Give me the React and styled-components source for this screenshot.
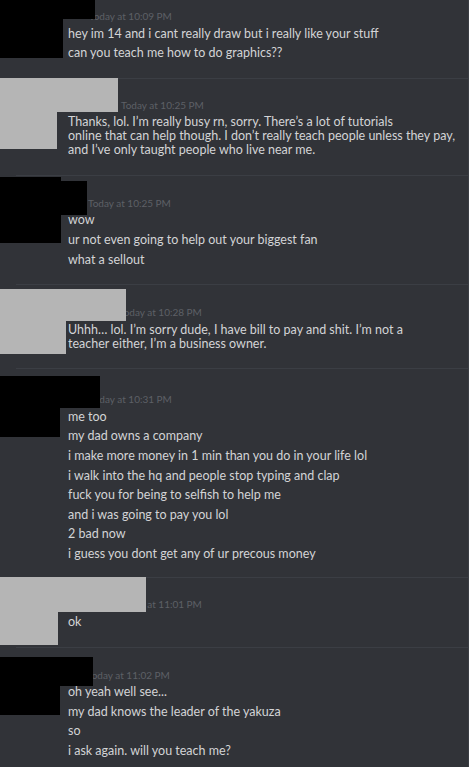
import React from "react";
import styled, { createGlobalStyle } from "styled-components";

const GlobalStyle = createGlobalStyle`
  html, body {
    margin: 0;
    padding: 0;
    background: #313338;
  }
`;

const groups = [
  {
    time: "Today at 10:09 PM",
    timeX: 89,
    padTop: 7,
    tone: "black",
    boxes: [
      { top: 0, w: 95, h: 19 },
      { top: 0, w: 63, h: 58 },
    ],
    messages: [
      ["hey im 14 and i cant really draw but i really like your stuff"],
      ["can you teach me how to do graphics??"],
    ],
  },
  {
    time: "Today at 10:25 PM",
    timeX: 121,
    tone: "gray",
    boxes: [
      { top: 0, w: 118, h: 34 },
      { top: 0, w: 57, h: 71 },
    ],
    messages: [
      [
        "Thanks, lol. I’m really busy rn, sorry. There’s a lot of tutorials",
        "online that can help though. I don’t really teach people unless they pay,",
        "and I’ve only taught people who live near me.",
      ],
    ],
  },
  {
    time: "Today at 10:25 PM",
    timeX: 88,
    padTop: 19,
    tone: "black",
    boxes: [
      { top: 6, w: 87, h: 34 },
      { top: 2, w: 61, h: 66 },
    ],
    messages: [["wow"], ["ur not even going to help out your biggest fan"], ["what a sellout"]],
  },
  {
    time: "Today at 10:28 PM",
    timeX: 119,
    padTop: 19,
    tone: "gray",
    boxes: [
      { top: 5, w: 126, h: 32 },
      { top: 5, w: 66, h: 65 },
    ],
    messages: [
      [
        "Uhhh… lol. I’m sorry dude, I have bill to pay and shit. I’m not a",
        "teacher either, I’m a business owner.",
      ],
    ],
  },
  {
    time: "Today at 10:31 PM",
    timeX: 89,
    padTop: 22,
    padBottom: 16.5,
    tone: "black",
    boxes: [
      { top: 8, w: 100, h: 32 },
      { top: 8, w: 60, h: 61 },
    ],
    messages: [
      ["me too"],
      ["my dad owns a company"],
      ["i make more money in 1 min than you do in your life lol"],
      ["i walk into the hq and people stop typing and clap"],
      ["fuck you for being to selfish to help me"],
      ["and i was going to pay you lol"],
      ["2 bad now"],
      ["i guess you dont get any of ur precous money"],
    ],
  },
  {
    time: "Today at 11:01 PM",
    timeX: 119,
    tone: "gray",
    boxes: [
      { top: 0, w: 146, h: 35 },
      { top: 0, w: 58, h: 68 },
    ],
    messages: [["ok"]],
  },
  {
    time: "Today at 11:02 PM",
    timeX: 87,
    padTop: 19,
    tone: "black",
    boxes: [
      { top: 10, w: 93, h: 29 },
      { top: 10, w: 60, h: 58 },
    ],
    messages: [
      ["oh yeah well see..."],
      ["my dad knows the leader of the yakuza"],
      ["so"],
      ["i ask again. will you teach me?"],
    ],
  },
];

const Chat = styled.div`
  width: 469px;
  height: 767px;
  overflow: hidden;
  background: #313338;
  font-family: Lato, "Open Sans", sans-serif;
  border-right: 1px solid #3a3d43;
  box-sizing: border-box;
`;

const Group = styled.section`
  position: relative;
  display: flex;
  flex-direction: column;
  gap: 5.6px;
  padding: ${(p) => p.$top}px 0 ${(p) => p.$bottom}px 68px;

  ${(p) =>
    !p.$first &&
    `
    &::before {
      content: "";
      position: absolute;
      top: 0;
      left: 16px;
      right: 0;
      height: 1px;
      background: #3b3e44;
    }
  `}
`;

const Header = styled.div`
  height: 14px;
  line-height: 14px;
  margin-left: ${(p) => p.$x - 68}px;
`;

const Time = styled.span`
  font-size: 10px;
  color: #5d6066;
`;

const Message = styled.div`
  font-size: 12.5px;
  line-height: 14px;
  color: #d3d4d6;
  white-space: nowrap;
`;

const Redact = styled.div`
  position: absolute;
  left: 0;
  background: ${(p) => (p.$tone === "gray" ? "#b5b5b5" : "#000")};
`;

function MessageGroup({ group, first }) {
  return (
    <Group
      $first={first}
      $top={group.padTop ?? 18}
      $bottom={group.padBottom ?? 17.5}
    >
      {group.boxes.map((b, i) => (
        <Redact
          key={i}
          $tone={group.tone}
          style={{ top: b.top, width: b.w, height: b.h }}
        />
      ))}
      <Header $x={group.timeX}>
        <Time>{group.time}</Time>
      </Header>
      {group.messages.map((lines, i) => (
        <Message key={i}>
          {lines.map((line, j) => (
            <React.Fragment key={j}>
              {j > 0 && <br />}
              {line}
            </React.Fragment>
          ))}
        </Message>
      ))}
    </Group>
  );
}

export default function App() {
  return (
    <>
      <GlobalStyle />
      <Chat>
        {groups.map((g, i) => (
          <MessageGroup key={i} group={g} first={i === 0} />
        ))}
      </Chat>
    </>
  );
}
